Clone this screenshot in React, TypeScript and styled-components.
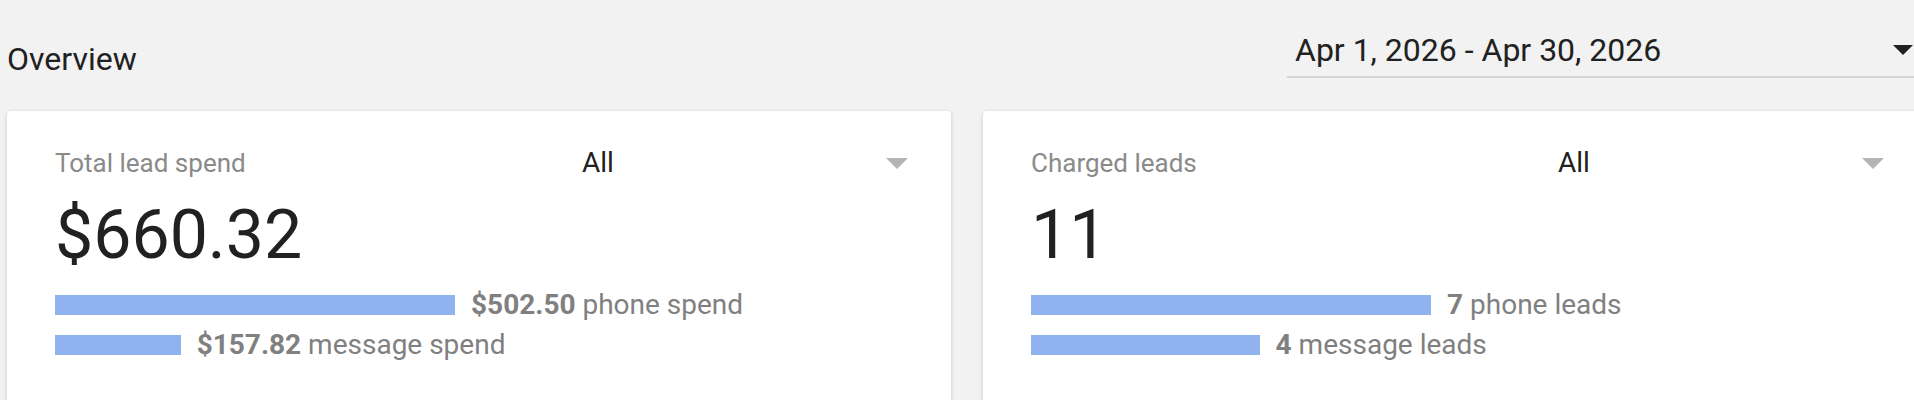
import React from 'react'
import styled, { createGlobalStyle } from 'styled-components'

const GlobalStyle = createGlobalStyle`
  html, body {
    margin: 0;
    padding: 0;
    background: #f2f2f2;
    overflow: hidden;
  }
  body {
    font-family: Roboto, 'Noto Sans', Arial, sans-serif;
    color: #212121;
  }
`

const Page = styled.div`
  width: 1920px;
  padding: 30px 0 0 7px;
`

const Header = styled.div`
  display: flex;
  justify-content: space-between;
  align-items: flex-start;
  margin-bottom: 32px;
`

const Title = styled.h1`
  margin: 9px 0 0 0;
  font-size: 32px;
  line-height: 40px;
  font-weight: 400;
  color: #212121;
`

const DateSelect = styled.div`
  width: 640px;
  box-sizing: border-box;
  display: flex;
  align-items: center;
  justify-content: space-between;
  padding: 0 14px 6px 8px;
  border-bottom: 2px solid #d4d4d4;
  font-size: 32px;
  line-height: 40px;
  color: #212121;
  cursor: pointer;
`

const Caret = styled.span<{ $color: string; $w: number; $h: number }>`
  display: block;
  width: 0;
  height: 0;
  border-left: ${({ $w }) => $w / 2}px solid transparent;
  border-right: ${({ $w }) => $w / 2}px solid transparent;
  border-top: ${({ $h }) => $h}px solid ${({ $color }) => $color};
`

const Cards = styled.div`
  display: grid;
  grid-template-columns: 1fr 1fr;
  gap: 32px;
`

const Card = styled.div`
  background: #fff;
  border-radius: 4px;
  box-shadow: 0 1px 4px rgba(0, 0, 0, 0.18);
  padding: 35px 43px 0 48px;
  min-height: 300px;
`

const CardHead = styled.div`
  display: flex;
  align-items: center;
`

const Label = styled.div`
  flex: 1;
  font-size: 26px;
  line-height: 32px;
  color: #8a8a8a;
`

const FilterSelect = styled.div`
  width: 326px;
  display: flex;
  align-items: center;
  justify-content: space-between;
  font-size: 28px;
  line-height: 32px;
  color: #212121;
  padding-top: 1px;
  cursor: pointer;
`

const BigValue = styled.div`
  margin-top: 16px;
  font-size: 68px;
  line-height: 80px;
  color: #212121;
`

const Breakdown = styled.div`
  margin-top: 10px;
`

const BarRow = styled.div`
  display: flex;
  align-items: center;
  gap: 16px;
  height: 40px;
  font-size: 28px;
  line-height: 40px;
  color: #808080;
`

const Bar = styled.div`
  height: 20px;
  background: #90b2ef;
  flex: none;
`

const Amount = styled.b`
  font-weight: 700;
`

type Part = { value: number; amount: string; text: string }

const MAX_BAR = 400

const StatCard = ({ label, total, parts }: { label: string; total: string; parts: Part[] }) => {
  const max = Math.max(...parts.map((p) => p.value))
  return (
    <Card>
      <CardHead>
        <Label>{label}</Label>
        <FilterSelect>
          <span>All</span>
          <Caret $color="#b4b4b4" $w={22} $h={11} />
        </FilterSelect>
      </CardHead>
      <BigValue>{total}</BigValue>
      <Breakdown>
        {parts.map((p) => (
          <BarRow key={p.text}>
            <Bar style={{ width: (p.value / max) * MAX_BAR }} />
            <span>
              <Amount>{p.amount}</Amount> {p.text}
            </span>
          </BarRow>
        ))}
      </Breakdown>
    </Card>
  )
}

const App = () => (
  <>
    <GlobalStyle />
    <Page>
      <Header>
        <Title>Overview</Title>
        <DateSelect>
          <span>Apr 1, 2026 - Apr 30, 2026</span>
          <Caret $color="#212121" $w={20} $h={10} />
        </DateSelect>
      </Header>
      <Cards>
        <StatCard
          label="Total lead spend"
          total="$660.32"
          parts={[
            { value: 502.5, amount: '$502.50', text: 'phone spend' },
            { value: 157.82, amount: '$157.82', text: 'message spend' },
          ]}
        />
        <StatCard
          label="Charged leads"
          total="11"
          parts={[
            { value: 7, amount: '7', text: 'phone leads' },
            { value: 4, amount: '4', text: 'message leads' },
          ]}
        />
      </Cards>
    </Page>
  </>
)

export default App
